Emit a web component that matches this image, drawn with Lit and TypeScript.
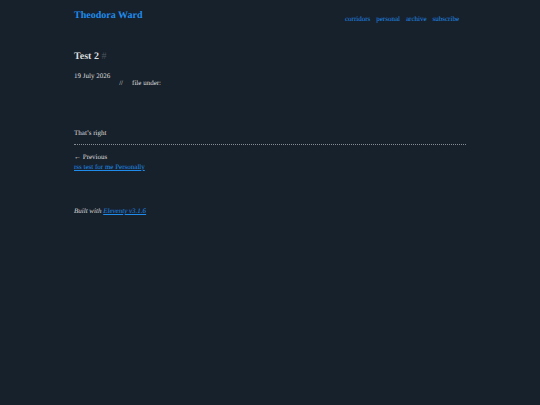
import { LitElement, html, css } from "lit";
import { customElement } from "lit/decorators.js";

@customElement("app-root")
export class AppRoot extends LitElement {
  static styles = css`
    :host {
      display: block;
      box-sizing: border-box;
      min-height: 100vh;
      background: #17212b;
      color: #dddddd;
      font-family: "Liberation Serif", "Times New Roman", serif;
      font-size: 7px;
      line-height: 10px;
      text-rendering: geometricPrecision;
    }
    a {
      color: #1f8ceb;
    }
    .page {
      max-width: 392px;
      margin: 0 auto;
    }
    .top {
      display: flex;
      justify-content: space-between;
      align-items: flex-end;
      padding-top: 8px;
    }
    .site {
      font-size: 10px;
      line-height: 16px;
      font-weight: bold;
      text-decoration: none;
    }
    .nav ul,
    .meta {
      display: flex;
      list-style: none;
      margin: 0;
      padding: 0;
    }
    .nav ul {
      gap: 6px;
      padding-right: 7px;
    }
    .nav a {
      text-decoration: none;
    }
    h1 {
      margin: 27px 0 8px;
      font-size: 10px;
      line-height: 12px;
    }
    .anchor {
      color: #4b545e;
      font-weight: normal;
      text-decoration: none;
    }
    .meta {
      gap: 9px;
      align-items: flex-end;
    }
    .meta .date {
      padding-bottom: 7px;
    }
    .body {
      margin: 40px 0 6px;
    }
    .pager {
      border-top: 1px dotted #858b91;
      padding-top: 7px;
    }
    .pager div {
      display: flex;
      flex-direction: column;
      align-items: flex-start;
    }
    footer {
      margin-top: 34px;
      font-style: italic;
    }
  `;

  render() {
    return html`
      <div class="page">
        <header class="top">
          <a class="site" href="#home">Theodora Ward</a>
          <nav class="nav" aria-label="Main">
            <ul>
              ${["corridors", "personal", "archive", "subscribe"].map(
                (name) => html`<li><a href="#${name}">${name}</a></li>`
              )}
            </ul>
          </nav>
        </header>
        <main>
          <h1 id="test-2">Test 2 <a class="anchor" href="#test-2">#</a></h1>
          <ul class="meta">
            <li class="date"><time datetime="2026-07-19">19 July 2026</time></li>
            <li>//</li>
            <li>file under:</li>
          </ul>
          <p class="body">That’s right</p>
          <nav class="pager" aria-label="Posts">
            <div>
              <span>← Previous</span>
              <a href="#previous">rss test for me Personally</a>
            </div>
          </nav>
        </main>
        <footer>Built with <a href="#eleventy">Eleventy v3.1.6</a></footer>
      </div>
    `;
  }
}
